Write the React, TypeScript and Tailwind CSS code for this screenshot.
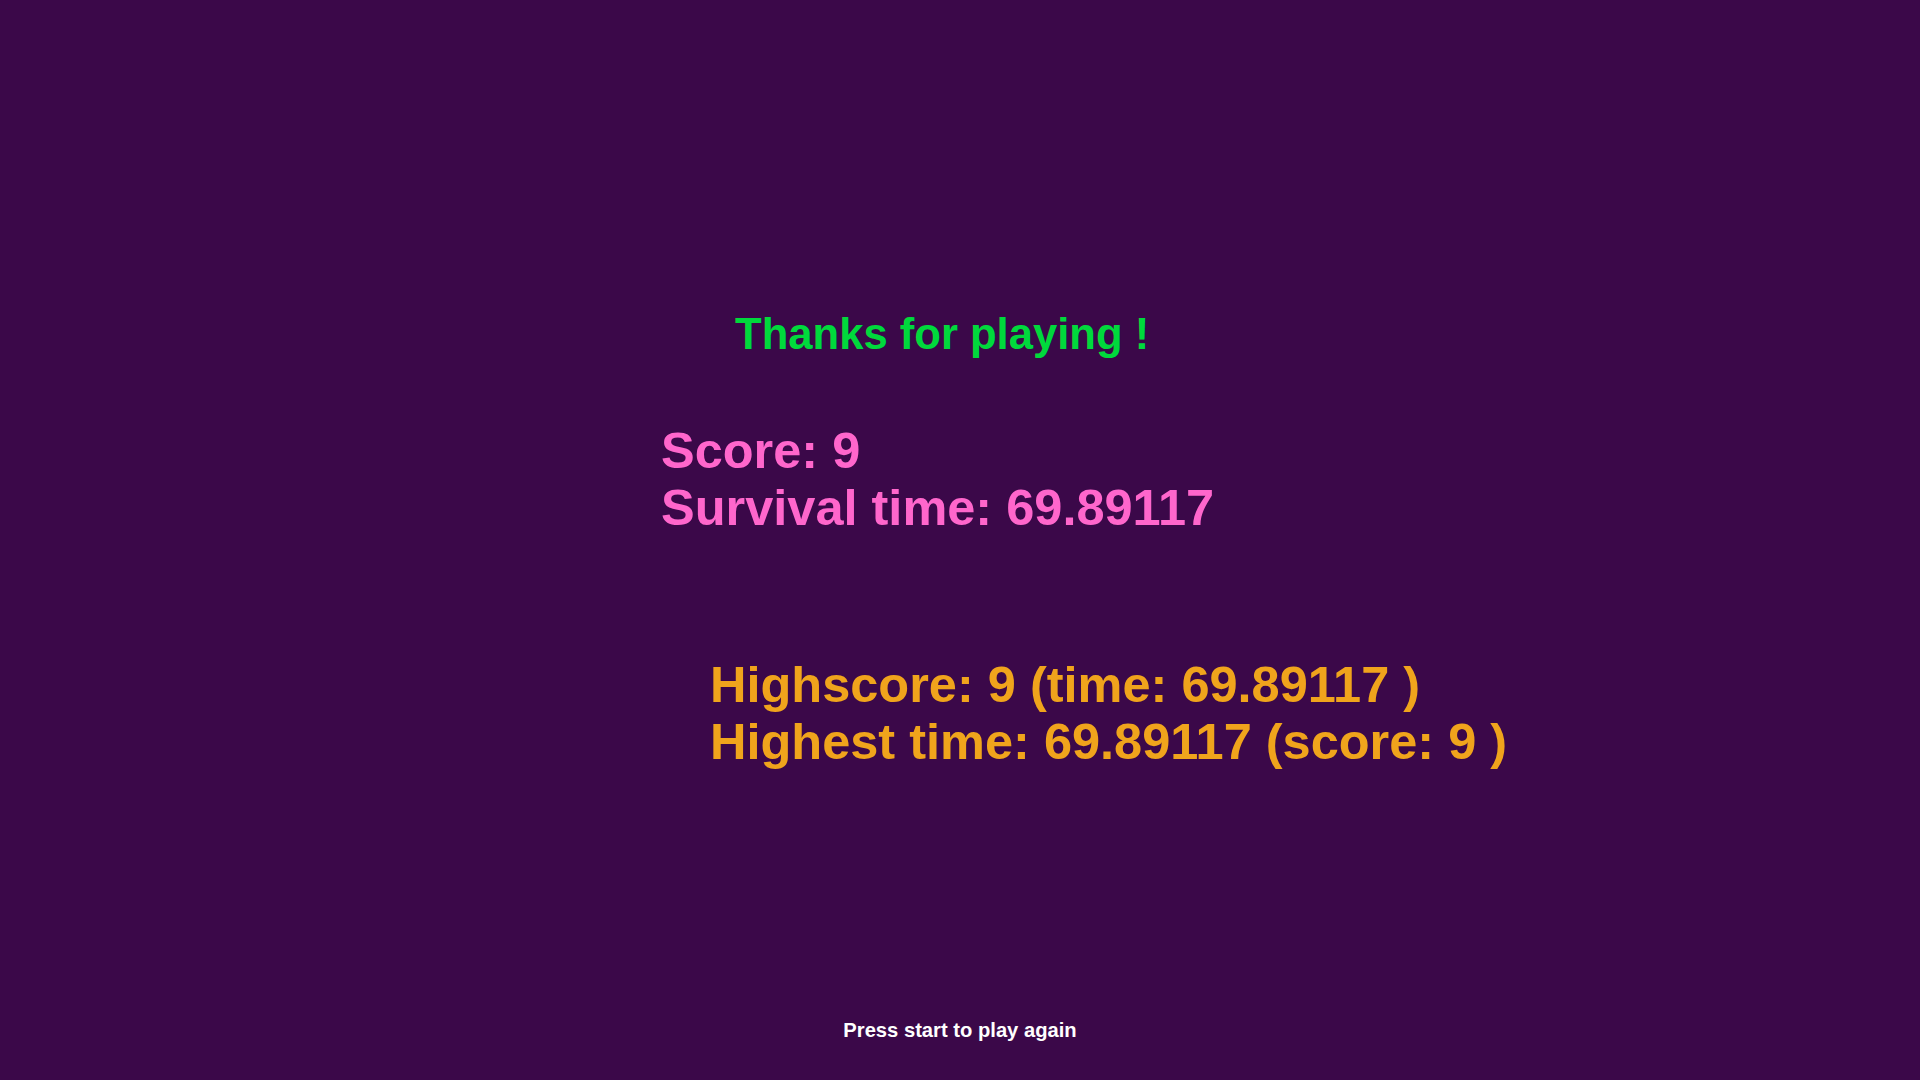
export default function App() {
  return (
    <div
      className="w-[1920px] h-[1080px] bg-[#3b0849] flex flex-col overflow-hidden"
      style={{ fontFamily: '"Liberation Sans", Arial, sans-serif' }}
    >
      {/* Title */}
      <div className="mt-[312px] ml-[735px] text-[43.6px] leading-[44px] font-bold text-[#00d93c] whitespace-nowrap">
        Thanks for playing !
      </div>

      {/* Current run */}
      <div className="mt-[66px] ml-[661px] text-[50.5px] leading-[57px] font-bold text-[#ff66cc] whitespace-nowrap">
        <div>Score: 9</div>
        <div>Survival time: 69.89117</div>
      </div>

      {/* Records */}
      <div className="mt-[120px] ml-[710px] text-[50.5px] leading-[57px] font-bold text-[#f0a41c] whitespace-nowrap">
        <div>Highscore: 9 (time: 69.89117 )</div>
        <div>Highest time: 69.89117 (score: 9 )</div>
      </div>

      <div className="mt-auto mb-[40px] text-center text-[20.2px] leading-[20px] font-bold text-white">
        Press start to play again
      </div>
    </div>
  );
}
